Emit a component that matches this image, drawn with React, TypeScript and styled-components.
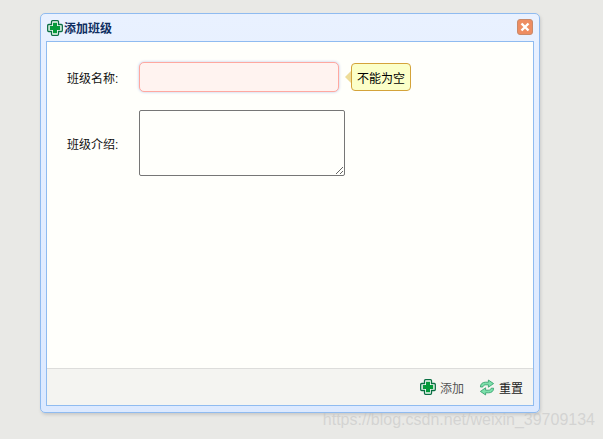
import styled, { createGlobalStyle } from 'styled-components';

const GlobalStyle = createGlobalStyle`
  html, body {
    margin: 0;
    height: 100%;
    background: #e9e9e6;
    font-family: "Liberation Sans", "Noto Sans CJK SC", sans-serif;
    font-size: 12px;
    color: #111;
    overflow: hidden;
  }
`;

const PlusIcon = () => (
  <svg width="16" height="16" viewBox="0 0 16 16">
    <path
      d="M5.5 0.7h5a1 1 0 0 1 1 1v2.8h2.8a1 1 0 0 1 1 1v5a1 1 0 0 1-1 1h-2.8v2.8a1 1 0 0 1-1 1h-5a1 1 0 0 1-1-1v-2.8H1.7a1 1 0 0 1-1-1v-5a1 1 0 0 1 1-1h2.8V1.7a1 1 0 0 1 1-1z"
      fill="#f4fbf6"
      stroke="#0a6f43"
      strokeWidth="1.3"
    />
    <path d="M6 2.8h4V6h3.2v4H10v3.2H6V10H2.8V6H6z" fill="#049a3a" />
  </svg>
);

const ReloadIcon = () => (
  <svg width="16" height="17" viewBox="0 0 16 17">
    <path
      d="M1.4 8C1.4 4.8 3.6 3.2 6.4 3.2h3V1l5.2 3.6-5.2 3.6V5.8H6.8C5.2 5.8 4.2 6.6 3.8 8z"
      fill="#7ce0aa"
      stroke="#2f9c68"
      strokeWidth="0.8"
      strokeLinejoin="round"
    />
    <path
      d="M14.6 9.2c0 3.2-2.2 4.6-5 4.6h-3V16L1.4 12.4l5.2-3.6v2.4h2.6c1.6 0 2.6-.6 3-2z"
      fill="#7ce0aa"
      stroke="#2f9c68"
      strokeWidth="0.8"
      strokeLinejoin="round"
    />
  </svg>
);

export default function App() {
  return (
    <>
      <GlobalStyle />
      <Window>
        <TitleBar>
          <TitleGroup>
            <PlusIcon />
            <Title>添加班级</Title>
          </TitleGroup>
          <CloseButton aria-label="close">
            <svg width="10" height="10" viewBox="0 0 10 10">
              <path d="M1.5 1.5l7 7M8.5 1.5l-7 7" stroke="#fff" strokeWidth="2.4" />
            </svg>
          </CloseButton>
        </TitleBar>
        <Panel>
          <Form>
            <Row>
              <Label>班级名称:</Label>
              <NameInput />
              <Tip>不能为空</Tip>
            </Row>
            <Row>
              <Label>班级介绍:</Label>
              <Intro />
            </Row>
          </Form>
          <Footer>
            <FooterButton>
              <PlusIcon />
              <ButtonText $muted>添加</ButtonText>
            </FooterButton>
            <FooterButton>
              <ReloadIcon />
              <ButtonText>重置</ButtonText>
            </FooterButton>
          </Footer>
        </Panel>
      </Window>
      <Watermark>https://blog.csdn.net/weixin_39709134</Watermark>
    </>
  );
}

const Window = styled.div`
  box-sizing: border-box;
  width: 500px;
  height: 400px;
  margin: 13px 0 0 40px;
  padding: 0 5px 6px;
  display: flex;
  flex-direction: column;
  background: linear-gradient(#e9f1ff, #dce9ff);
  border: 1px solid #8fbbf0;
  border-radius: 5px;
  box-shadow: 1px 2px 3px rgba(120, 120, 120, 0.25);
`;

const TitleBar = styled.div`
  height: 27px;
  flex: none;
  display: flex;
  align-items: center;
  justify-content: space-between;
`;

const TitleGroup = styled.div`
  display: flex;
  align-items: center;
  gap: 1px;
  margin-left: 1px;
`;

const Title = styled.span`
  font-weight: bold;
  color: #0e2d5f;
`;

const CloseButton = styled.div`
  box-sizing: border-box;
  width: 16px;
  height: 16px;
  margin: 0 1px 1px 0;
  display: flex;
  align-items: center;
  justify-content: center;
  background: #ee8d62;
  border: 1px solid #c98a6a;
  border-radius: 3px;
`;

const Panel = styled.div`
  flex: 1;
  min-height: 0;
  display: flex;
  flex-direction: column;
  background: #fffffb;
  border: 1px solid #8fbbf0;
`;

const Form = styled.div`
  flex: 1;
  display: flex;
  flex-direction: column;
  gap: 18px;
  padding: 20px 0 0 20px;
`;

const Row = styled.div`
  display: flex;
  align-items: center;
`;

const Label = styled.label`
  width: 72px;
  flex: none;
`;

const NameInput = styled.input`
  box-sizing: border-box;
  width: 200px;
  height: 30px;
  padding: 0 4px;
  background: #fff3f0;
  border: 1px solid #ffa8a0;
  border-radius: 5px;
  box-shadow: 0 0 3px 0 #b8c4e8;
  outline: none;
`;

const Tip = styled.div`
  position: relative;
  box-sizing: border-box;
  height: 28px;
  margin-left: 12px;
  padding: 0 5px;
  display: flex;
  align-items: center;
  color: #000;
  background: #fbffc8;
  border: 1px solid #d4a33a;
  border-radius: 4px;

  &::before {
    content: '';
    position: absolute;
    left: -7px;
    top: 7px;
    border-style: solid;
    border-width: 6px 6px 6px 0;
    border-color: transparent #eedc98 transparent transparent;
  }
`;

const Intro = styled.textarea`
  box-sizing: border-box;
  width: 206px;
  height: 66px;
  margin: 0;
  padding: 2px;
  background: #fffffb;
  border: 1px solid #767676;
  border-radius: 2px;
  outline: none;
`;

const Footer = styled.div`
  height: 37px;
  flex: none;
  box-sizing: border-box;
  display: flex;
  align-items: center;
  justify-content: flex-end;
  gap: 15px;
  padding: 0 10px 0 0;
  background: #f4f4f1;
  border-top: 1px solid #dddddb;
`;

const FooterButton = styled.div`
  display: flex;
  align-items: center;
  gap: 4px;
`;

const ButtonText = styled.span<{ $muted?: boolean }>`
  color: ${(p) => (p.$muted ? '#555' : '#222')};
`;

const Watermark = styled.div`
  position: absolute;
  right: 8px;
  top: 411px;
  font-size: 16px;
  color: rgba(190, 190, 190, 0.5);
  white-space: nowrap;
`;
